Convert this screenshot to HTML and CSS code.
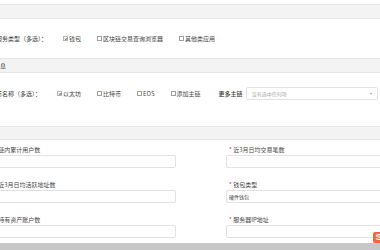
FILE: index.html
```html
<!DOCTYPE html>
<html lang="zh-CN">

<head>
  <meta charset="UTF-8">
  <meta name="viewport" content="width=device-width, initial-scale=1.0">
  <title>应用信息</title>
  <link rel="stylesheet" href="styles.css">
</head>

<body>
  <div class="spacer"></div>
  <div class="band"></div>

  <div class="row row-service">
    <span class="row-label label-service"><span>服务类型（多选）：</span></span>
    <label class="check"><i class="box on"></i>钱包</label>
    <label class="check"><i class="box"></i>区块链交易查询浏览器</label>
    <label class="check"><i class="box"></i>其他类应用</label>
  </div>

  <div class="band"><span class="band-title"><span>主链信息</span></span></div>

  <div class="row row-coin">
    <span class="row-label label-coin"><span>主链币名称（多选）：</span></span>
    <label class="check"><i class="box on"></i>以太坊</label>
    <label class="check"><i class="box"></i>比特币</label>
    <label class="check"><i class="box"></i>EOS</label>
    <label class="check"><i class="box"></i>添加主链</label>
    <div class="more">
      <span class="more-label">更多主链</span>
      <div class="select"><span>没有选中任何项</span><i class="caret"></i></div>
    </div>
  </div>

  <div class="band band-sm"></div>

  <div class="form">
    <div class="field">
      <div class="field-label"><em>*</em> 主链内累计用户数</div>
      <div class="input"></div>
    </div>
    <div class="field">
      <div class="field-label"><em>*</em> 近3月日均交易笔数</div>
      <div class="input"></div>
    </div>
    <div class="field">
      <div class="field-label"><em>*</em> 链近3月日均活跃地址数</div>
      <div class="input"></div>
    </div>
    <div class="field">
      <div class="field-label"><em>*</em> 钱包类型</div>
      <div class="input">硬件钱包</div>
    </div>
    <div class="field">
      <div class="field-label"><em>*</em> 总持有资产账户数</div>
      <div class="input"></div>
    </div>
    <div class="field">
      <div class="field-label"><em>*</em> 服务器IP地址</div>
      <div class="input"></div>
    </div>
  </div>

  <div class="footer"></div>
  <div class="ime">S</div>
</body>

</html>
```

FILE: styles.css
```css
* {
  padding: 0;
  margin: 0;
  box-sizing: border-box;
}

body {
  position: relative;
  width: 380px;
  height: 250px;
  overflow: hidden;
  background: #fff;
  color: #484848;
  font-family: "Noto Sans CJK SC", "Noto Sans", sans-serif;
  font-size: 6px;
}

.spacer {
  height: 4px;
}

.band {
  display: flex;
  align-items: center;
  height: 15px;
  background: #f3f3f3;
  border-top: 1px solid #e6e6e6;
  border-bottom: 1px solid #e6e6e6;
}

.band-sm {
  height: 14px;
}

.band-title {
  display: flex;
  justify-content: flex-end;
  width: 6px;
  white-space: nowrap;
  color: #3c3c3c;
}

.row {
  display: flex;
  gap: 16px;
  white-space: nowrap;
}

.row-service {
  height: 39px;
  align-items: center;
}

.row-coin {
  height: 53px;
  padding-top: 14px;
  align-items: flex-start;
}

.row-coin > * {
  height: 13px;
  line-height: 13px;
}

.row-label {
  display: flex;
  justify-content: flex-end;
  flex: none;
  color: #3c3c3c;
}

.label-service {
  width: 47px;
}

.label-coin {
  width: 41px;
}

.check {
  display: inline-flex;
  align-items: center;
}

.box {
  flex: none;
  width: 5px;
  height: 5px;
  margin-right: 1px;
  border: 1px solid #a0a0a0;
  position: relative;
}

.box.on {
  border-color: #b4b4b4;
}

.box.on::after {
  content: "";
  position: absolute;
  left: 1px;
  top: -0.5px;
  width: 1.2px;
  height: 2.4px;
  border-right: 0.8px solid #808080;
  border-bottom: 0.8px solid #808080;
  transform: rotate(45deg);
}

.more {
  display: flex;
  gap: 3px;
  margin-left: 2px;
}

.more-label {
  color: #3c3c3c;
  font-weight: 500;
}

.select {
  display: flex;
  align-items: center;
  justify-content: space-between;
  width: 132px;
  height: 13px;
  padding: 0 5px;
  border: 1px solid #e2e2e2;
  border-radius: 2px;
  font-size: 5px;
  color: #aaa;
}

.caret {
  width: 0;
  height: 0;
  border-left: 1.5px solid transparent;
  border-right: 1.5px solid transparent;
  border-top: 2px solid #999;
}

.form {
  display: grid;
  grid-template-columns: 191px 1fr;
  column-gap: 50px;
  row-gap: 13px;
  align-content: start;
  width: 420px;
  height: 103px;
  margin-left: -15px;
  padding-top: 6px;
}

.field-label {
  height: 8px;
  line-height: 8px;
  margin-bottom: 1px;
  padding-left: 3px;
  white-space: nowrap;
}

.field-label em {
  font-style: normal;
  color: #e4393c;
}

.input {
  height: 13px;
  line-height: 11px;
  padding-left: 2px;
  border: 1px solid #e2e2e2;
  border-radius: 2px;
  font-size: 5px;
  color: #3c3c3c;
}

.footer {
  height: 7px;
  background: #c7c7c7;
}

.ime {
  position: absolute;
  left: 373px;
  top: 232px;
  width: 11px;
  height: 11px;
  border-radius: 2px;
  background: #f0673a;
  color: #fff;
  font-family: "Liberation Sans", sans-serif;
  font-weight: bold;
  font-size: 9px;
  line-height: 11px;
  text-align: center;
}
```
